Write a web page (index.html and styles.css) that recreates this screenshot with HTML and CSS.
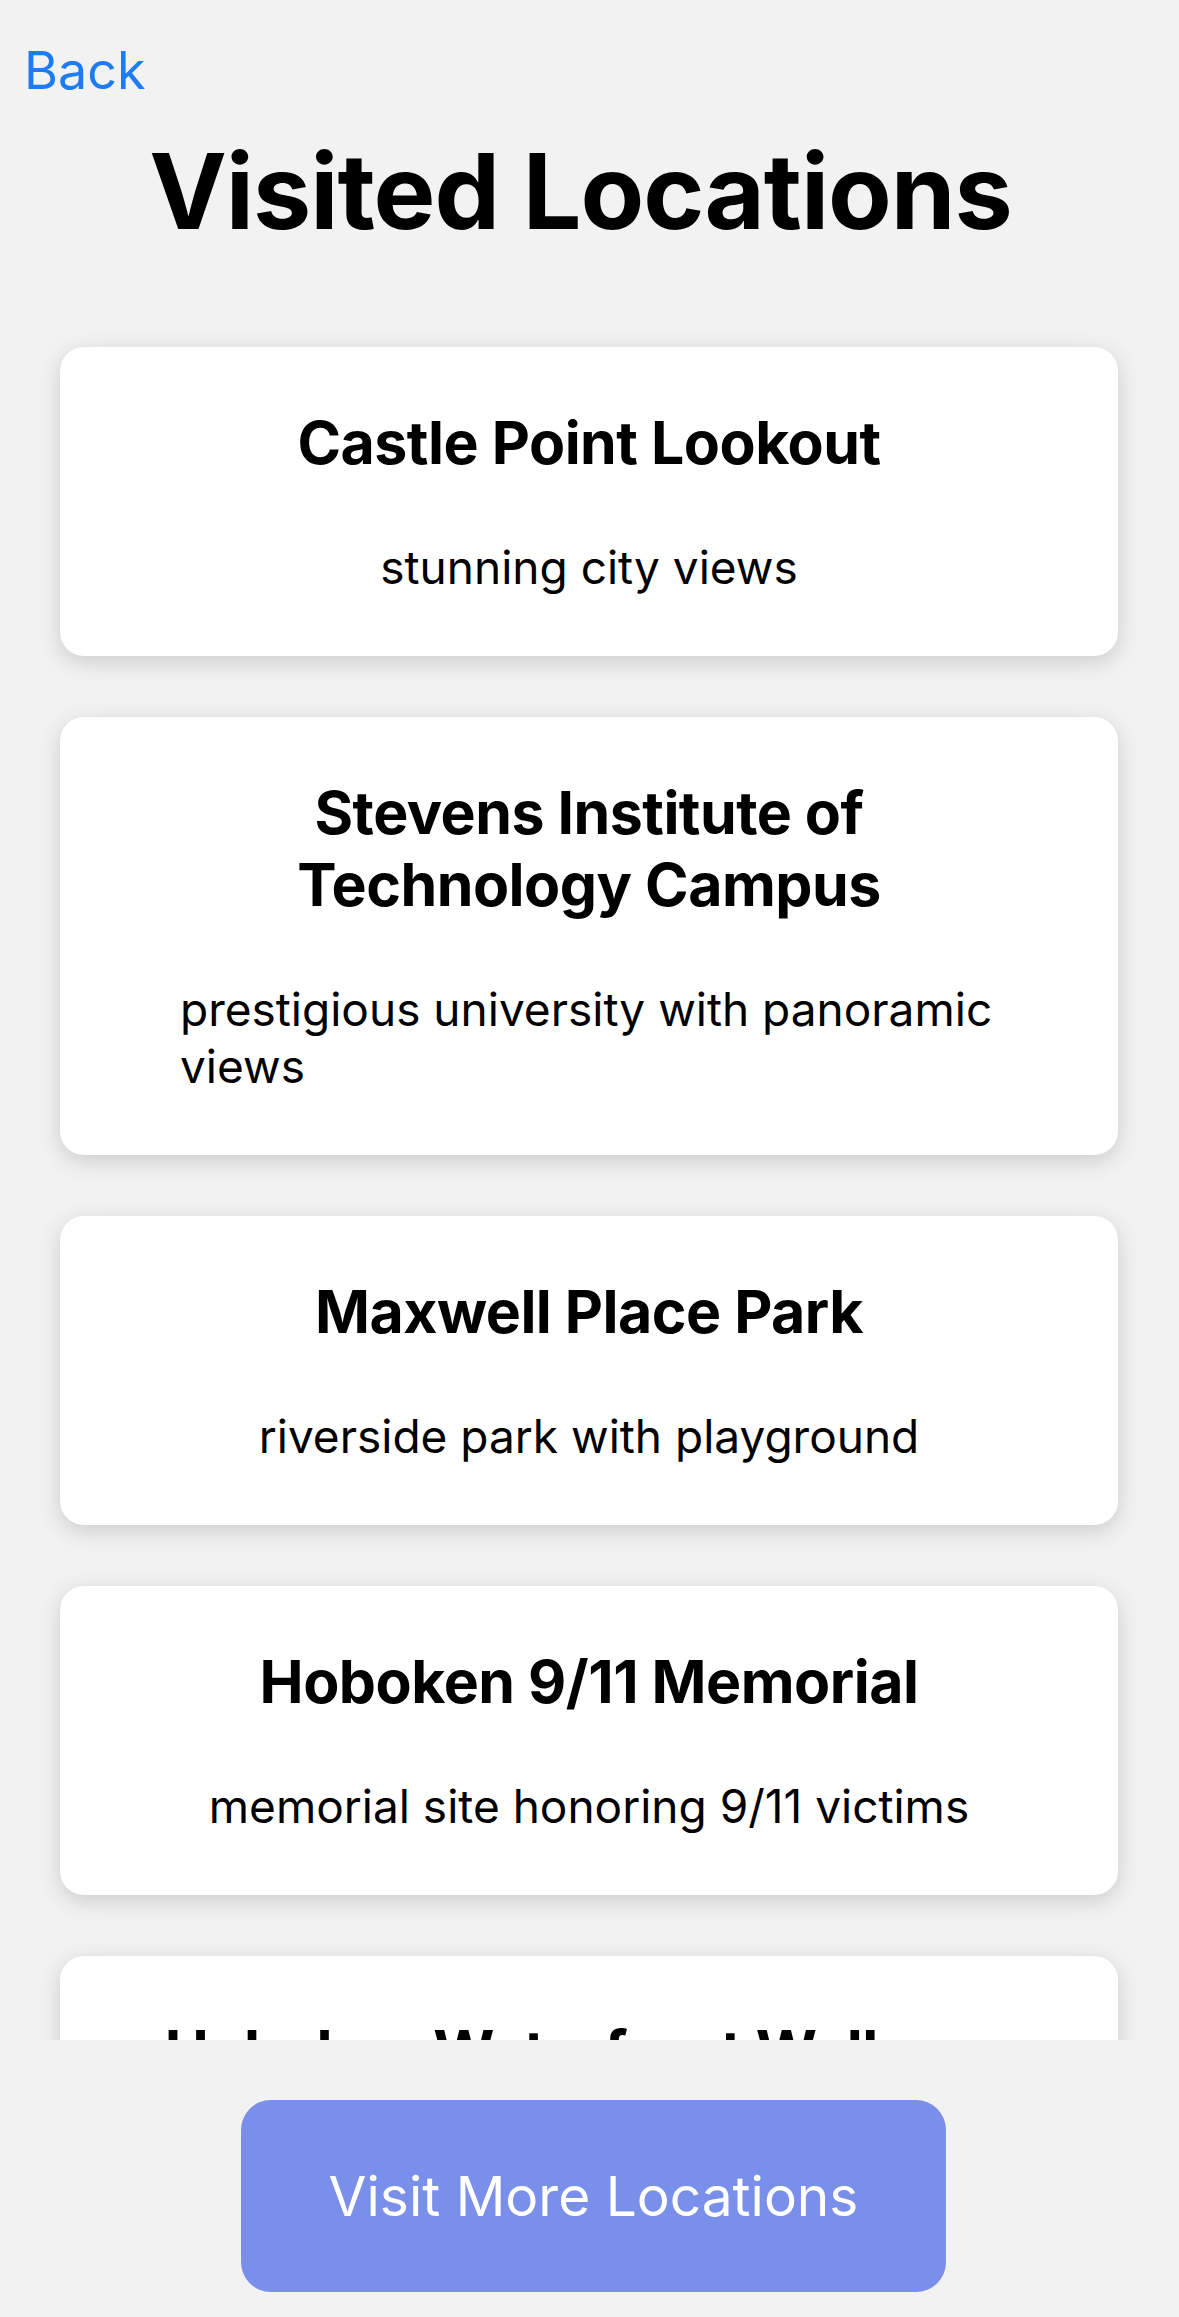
FILE: index.html
```html
<!DOCTYPE html>
<html lang="en">
<head>
<meta charset="utf-8">
<title>Visited Locations</title>
<link rel="stylesheet" href="styles.css">
</head>
<body>
<div class="screen">
  <header class="header">
    <a class="back" href="#">Back</a>
    <h1 class="page-title">Visited Locations</h1>
  </header>
  <main class="list">
    <div class="card">
      <h2 class="card-title">Castle Point Lookout</h2>
      <p class="card-desc">stunning city views</p>
    </div>
    <div class="card">
      <h2 class="card-title">Stevens Institute of Technology Campus</h2>
      <p class="card-desc">prestigious university with panoramic views</p>
    </div>
    <div class="card">
      <h2 class="card-title">Maxwell Place Park</h2>
      <p class="card-desc">riverside park with playground</p>
    </div>
    <div class="card">
      <h2 class="card-title">Hoboken 9/11 Memorial</h2>
      <p class="card-desc">memorial site honoring 9/11 victims</p>
    </div>
    <div class="card">
      <h2 class="card-title">Hoboken Waterfront Walkway</h2>
    </div>
  </main>
  <footer class="footer">
    <button class="primary-btn" type="button">Visit More Locations</button>
  </footer>
</div>
</body>
</html>
```
FILE: styles.css
```css
* { box-sizing: border-box; }
html, body {
  margin: 0;
  padding: 0;
  background: #f2f2f2;
}
body {
  font-family: Inter, "Noto Sans", "Liberation Sans", sans-serif;
  color: #000;
}
.screen {
  width: 1179px;
  height: 2317px;
  display: flex;
  flex-direction: column;
  overflow: hidden;
}
.header {
  display: flex;
  flex-direction: column;
  padding: 39px 0 0 0;
}
.back {
  align-self: flex-start;
  margin-left: 24px;
  font-size: 52px;
  line-height: 64px;
  color: #1d7cf2;
  text-decoration: none;
}
.page-title {
  margin: 23px 18px 0 0;
  font-size: 104px;
  line-height: 130px;
  font-weight: 700;
  text-align: center;
  letter-spacing: -1px;
}
.list {
  flex: 1;
  min-height: 0;
  overflow: hidden;
  padding: 91px 61px 0 60px;
  display: flex;
  flex-direction: column;
  gap: 61px;
}
.card {
  flex-shrink: 0;
  background: #fff;
  border-radius: 24px;
  padding: 60px;
  box-shadow: 0 6px 22px rgba(0, 0, 0, 0.16);
  display: flex;
  flex-direction: column;
  align-items: center;
  gap: 60px;
}
.card-title {
  margin: 0;
  max-width: 880px;
  font-size: 59px;
  line-height: 72px;
  font-weight: 700;
  text-align: center;
  letter-spacing: -0.5px;
}
.card-desc {
  margin: 0;
  width: fit-content;
  max-width: 818px;
  font-size: 46px;
  line-height: 57px;
  font-weight: 400;
  text-align: left;
}
.footer {
  flex-shrink: 0;
  display: flex;
  justify-content: center;
  padding: 60px 0 25px 8px;
}
.primary-btn {
  width: 705px;
  height: 192px;
  border: none;
  border-radius: 30px;
  background: #798fea;
  color: #fff;
  font-family: Inter, "Noto Sans", "Liberation Sans", sans-serif;
  font-size: 55px;
  font-weight: 400;
}
```
